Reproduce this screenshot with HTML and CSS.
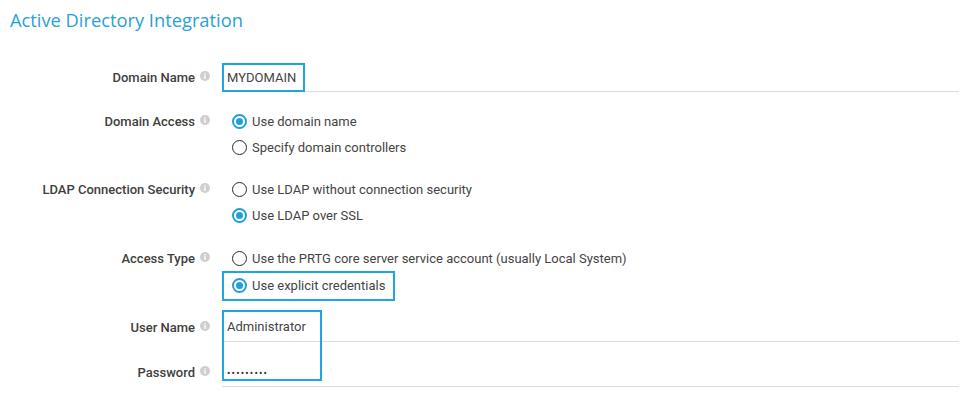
FILE: index.html
```html
<!DOCTYPE html>
<html lang="en">
<head>
<meta charset="utf-8">
<title>Active Directory Integration</title>
<link rel="stylesheet" href="styles.css">
</head>
<body>
<h1 class="title">Active Directory Integration</h1>
<div class="form">
  <div class="row">
    <div class="label field-label">Domain Name <svg class="info" viewBox="0 0 10 10"><circle cx="5" cy="5" r="5"/><rect x="4.3" y="4.2" width="1.4" height="3.6"/><rect x="4.3" y="2.2" width="1.4" height="1.3"/></svg></div>
    <div class="field"><span class="value boxed">MYDOMAIN</span></div>
  </div>
  <div class="row">
    <div class="label">Domain Access <svg class="info" viewBox="0 0 10 10"><circle cx="5" cy="5" r="5"/><rect x="4.3" y="4.2" width="1.4" height="3.6"/><rect x="4.3" y="2.2" width="1.4" height="1.3"/></svg></div>
    <div class="options">
      <div class="option"><span class="radio checked"></span>Use domain name</div>
      <div class="option"><span class="radio"></span>Specify domain controllers</div>
    </div>
  </div>
  <div class="row">
    <div class="label">LDAP Connection Security <svg class="info" viewBox="0 0 10 10"><circle cx="5" cy="5" r="5"/><rect x="4.3" y="4.2" width="1.4" height="3.6"/><rect x="4.3" y="2.2" width="1.4" height="1.3"/></svg></div>
    <div class="options">
      <div class="option"><span class="radio"></span>Use LDAP without connection security</div>
      <div class="option"><span class="radio checked"></span>Use LDAP over SSL</div>
    </div>
  </div>
  <div class="row access-row">
    <div class="label">Access Type <svg class="info" viewBox="0 0 10 10"><circle cx="5" cy="5" r="5"/><rect x="4.3" y="4.2" width="1.4" height="3.6"/><rect x="4.3" y="2.2" width="1.4" height="1.3"/></svg></div>
    <div class="options">
      <div class="option"><span class="radio"></span>Use the PRTG core server service account (usually Local System)</div>
      <div class="option highlighted"><span class="radio checked"></span>Use explicit credentials</div>
    </div>
  </div>
  <div class="cred-group">
    <div class="row">
      <div class="label field-label">User Name <svg class="info" viewBox="0 0 10 10"><circle cx="5" cy="5" r="5"/><rect x="4.3" y="4.2" width="1.4" height="3.6"/><rect x="4.3" y="2.2" width="1.4" height="1.3"/></svg></div>
      <div class="field"><span class="value">Administrator</span></div>
    </div>
    <div class="row">
      <div class="label field-label">Password <svg class="info" viewBox="0 0 10 10"><circle cx="5" cy="5" r="5"/><rect x="4.3" y="4.2" width="1.4" height="3.6"/><rect x="4.3" y="2.2" width="1.4" height="1.3"/></svg></div>
      <div class="field"><span class="value dots">•••••••••</span></div>
    </div>
    <div class="cred-highlight"></div>
  </div>
</div>
</body>
</html>
```

FILE: styles.css
```css
html, body {
  margin: 0;
  padding: 0;
  background: #ffffff;
}

body {
  font-family: Roboto, "Liberation Sans", sans-serif;
  font-size: 13px;
  color: #444444;
}

.title {
  margin: 0 0 30px 0;
  padding: 7px 0 0 10px;
  height: 25px;
  font-family: "Open Sans", "Noto Sans", sans-serif;
  font-weight: 400;
  font-size: 18.3px;
  line-height: 25px;
  color: #2a9fd8;
}

.form {
  display: flex;
  flex-direction: column;
  gap: 16px;
  padding-right: 9px;
}

.row {
  display: grid;
  grid-template-columns: 222px 1fr;
}

.access-row {
  margin-top: 1px;
}

.label {
  display: flex;
  justify-content: flex-end;
  align-items: center;
  gap: 5px;
  padding-right: 12px;
  height: 26px;
  font-weight: 500;
  color: #404040;
  white-space: nowrap;
}

.label.field-label {
  height: 30px;
}

.info {
  width: 10px;
  height: 10px;
  margin-top: -3px;
  fill: #cfcfcf;
}

.info rect {
  fill: #ffffff;
}

.field {
  height: 29px;
  border-bottom: 1px solid #dcdcdc;
  display: flex;
  align-items: flex-start;
}

.value {
  display: inline-flex;
  align-items: center;
  height: 29px;
  padding-left: 5px;
  color: #444444;
}

.value.boxed {
  box-sizing: border-box;
  margin-top: 1px;
  padding: 0 7px 0 3px;
  border: 2px solid #1ea6df;
}

.value.dots {
  box-sizing: border-box;
  padding-top: 4px;
  font-size: 10px;
  letter-spacing: 1.2px;
  color: #333333;
}

.options {
  display: flex;
  flex-direction: column;
  align-items: flex-start;
}

.option {
  display: flex;
  align-items: center;
  gap: 5px;
  height: 26px;
  padding: 0 8px 0 10px;
  white-space: nowrap;
}

.option.highlighted {
  box-sizing: border-box;
  height: 30px;
  margin-bottom: -5px;
  padding-right: 10px;
  padding-bottom: 1px;
  outline: 2px solid #1ea6df;
  outline-offset: -2px;
}

.radio {
  box-sizing: border-box;
  width: 15px;
  height: 15px;
  border: 1.5px solid #2a2a2a;
  border-radius: 50%;
  display: flex;
  align-items: center;
  justify-content: center;
  flex: none;
}

.radio.checked {
  border: 2px solid #1ea0db;
}

.radio.checked::after {
  content: "";
  width: 7px;
  height: 7px;
  border-radius: 50%;
  background: #1ea0db;
}

.cred-group {
  position: relative;
  display: flex;
  flex-direction: column;
  gap: 15px;
}

.cred-highlight {
  position: absolute;
  left: 222px;
  top: -2px;
  width: 100px;
  height: 71px;
  box-sizing: border-box;
  border: 2px solid #1ea6df;
  pointer-events: none;
}
```
